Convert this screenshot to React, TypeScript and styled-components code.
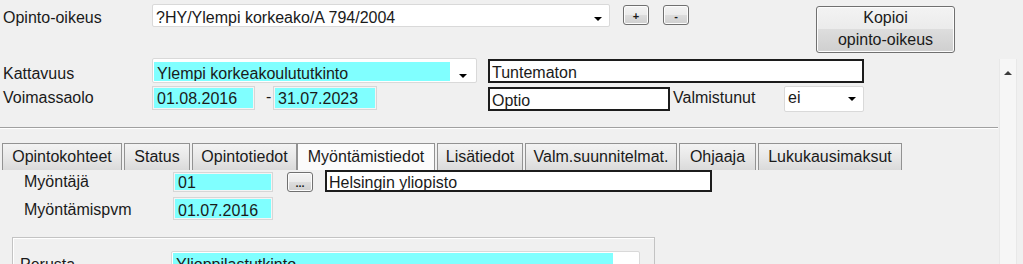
import React from 'react';
import styled, { createGlobalStyle } from 'styled-components';

const GlobalStyle = createGlobalStyle`
  html, body {
    margin: 0;
    padding: 0;
    background: #f0f0f0;
  }
  body {
    font-family: "Liberation Sans", Arial, sans-serif;
    font-size: 16px;
    line-height: 16px;
    color: #1a1a1a;
    overflow: hidden;
  }
  * {
    box-sizing: border-box;
  }
`;

const Screen = styled.div`
  width: 1023px;
  height: 264px;
  overflow: hidden;
  display: flex;
  flex-direction: column;
`;

const Body = styled.div`
  display: flex;
  flex: 1;
  min-height: 0;
`;

const Content = styled.div`
  width: 998px;
  display: flex;
  flex-direction: column;
  flex-shrink: 0;
`;

const Row = styled.div<{ $h: number; $pl?: number }>`
  display: flex;
  align-items: flex-start;
  height: ${p => p.$h}px;
  padding-left: ${p => p.$pl ?? 0}px;
  flex-shrink: 0;
`;

const Label = styled.div<{ $w: number; $pt: number; $pl?: number }>`
  width: ${p => p.$w}px;
  padding-top: ${p => p.$pt}px;
  padding-left: ${p => p.$pl ?? 0}px;
  white-space: nowrap;
  flex-shrink: 0;
`;

const Combo = styled.div<{ $w: number; $h: number; $mt?: number; $ml?: number }>`
  display: flex;
  width: ${p => p.$w}px;
  height: ${p => p.$h}px;
  margin-top: ${p => p.$mt ?? 0}px;
  margin-left: ${p => p.$ml ?? 0}px;
  background: #fff;
  border: 1px solid #d9d9d9;
  border-radius: 2px;
  flex-shrink: 0;
`;

const ComboValue = styled.div<{ $hl?: boolean; $pt: number; $m?: string; $h?: number }>`
  flex: 1;
  margin: ${p => p.$m ?? '0'};
  height: ${p => (p.$h ? `${p.$h}px` : 'auto')};
  padding: ${p => p.$pt}px 0 0 3px;
  background: ${p => (p.$hl ? '#80ffff' : 'transparent')};
  white-space: nowrap;
  overflow: hidden;
`;

const ComboArrow = styled.div<{ $w: number; $pt: number }>`
  width: ${p => p.$w}px;
  padding-top: ${p => p.$pt}px;
  display: flex;
  justify-content: center;
  flex-shrink: 0;
  &::after {
    content: '';
    border-left: 4px solid transparent;
    border-right: 4px solid transparent;
    border-top: 4px solid #000;
  }
`;

const CyanField = styled.div<{ $w: number; $h: number; $pt: number; $mt?: number }>`
  width: ${p => p.$w}px;
  height: ${p => p.$h}px;
  margin-top: ${p => p.$mt ?? 0}px;
  padding: ${p => p.$pt}px 0 0 4px;
  background: #80ffff;
  border: 1px solid #d6d6d6;
  box-shadow: inset 0 0 0 1px #f4f4f4;
  white-space: nowrap;
  flex-shrink: 0;
`;

const TextBox = styled.div<{ $w: number; $h: number; $pt: number; $mt?: number; $ml?: number }>`
  width: ${p => p.$w}px;
  height: ${p => p.$h}px;
  margin-top: ${p => p.$mt ?? 0}px;
  margin-left: ${p => p.$ml ?? 0}px;
  padding: ${p => p.$pt}px 0 0 2px;
  background: #fff;
  border: 2px solid #1c1c1c;
  white-space: nowrap;
  flex-shrink: 0;
`;

const Dash = styled.div`
  width: 18px;
  padding: 3px 0 0 11px;
  flex-shrink: 0;
`;

const Inline = styled.div<{ $w: number; $pt: number; $ml?: number }>`
  width: ${p => p.$w}px;
  margin-left: ${p => p.$ml ?? 0}px;
  padding-top: ${p => p.$pt}px;
  white-space: nowrap;
  flex-shrink: 0;
`;

const buttonFace = `
  border: 1px solid #707070;
  border-radius: 3px;
  background: linear-gradient(#f3f3f3 0%, #ebebeb 50%, #dddddd 50%, #cfcfcf 100%);
  box-shadow: inset 0 0 0 1px #fcfcfc;
  color: #1a1a1a;
  font-family: "Liberation Sans", Arial, sans-serif;
  flex-shrink: 0;
`;

const SmallButton = styled.div<{ $ml: number; $mt: number }>`
  ${buttonFace}
  width: 26px;
  height: 20px;
  margin-left: ${p => p.$ml}px;
  margin-top: ${p => p.$mt}px;
  font-size: 11px;
  font-weight: bold;
  line-height: 11px;
  padding-top: 5px;
  text-align: center;
`;

const CopyButton = styled.div`
  ${buttonFace}
  width: 139px;
  height: 47px;
  margin-left: 127px;
  margin-top: 6px;
  font-size: 16px;
  line-height: 22px;
  text-align: center;
`;

const ScrollTrack = styled.div`
  width: 18px;
  margin: 1px 0 0 1px;
  padding-top: 12px;
  background: #f6f6f6;
  border-left: 1px solid #e8e8e8;
  border-right: 1px solid #e8e8e8;
  display: flex;
  justify-content: center;
  flex-shrink: 0;
  &::before {
    content: '';
    height: 0;
    border-left: 4px solid transparent;
    border-right: 4px solid transparent;
    border-bottom: 4px solid #3c3c3c;
  }
`;

const Separator = styled.div`
  height: 2px;
  border-top: 1px solid #a0a0a0;
  border-bottom: 1px solid #ffffff;
  flex-shrink: 0;
`;

const TabStrip = styled.div`
  display: flex;
  gap: 2px;
  height: 27px;
  margin-top: 14px;
  padding-left: 2px;
  flex-shrink: 0;
`;

const Tab = styled.div<{ $active?: boolean; $w: number }>`
  width: ${p => p.$w}px;
  height: 27px;
  padding-top: 5px;
  text-align: center;
  border: 1px solid #929292;
  border-bottom: none;
  margin-left: ${p => (p.$active ? '-2px' : '0')};
  background: ${p =>
    p.$active ? '#fbfbfb' : 'linear-gradient(#f3f3f3 0%, #e8e8e8 50%, #dadada 100%)'};
  white-space: nowrap;
  flex-shrink: 0;
`;

const GroupBox = styled.div`
  width: 643px;
  height: 60px;
  margin: 13px 0 0 12px;
  border: 1px solid #c3c3c3;
  box-shadow: inset 1px 1px 0 #ffffff;
  display: flex;
  align-items: flex-start;
  padding: 13px 0 0 7px;
  flex-shrink: 0;
`;

const tabs = [
  { label: 'Opintokohteet', width: 120 },
  { label: 'Status', width: 66 },
  { label: 'Opintotiedot', width: 105 },
  { label: 'Myöntämistiedot', width: 138 },
  { label: 'Lisätiedot', width: 86 },
  { label: 'Valm.suunnitelmat.', width: 152 },
  { label: 'Ohjaaja', width: 77 },
  { label: 'Lukukausimaksut', width: 144 },
];

export default function App() {
  return (
    <Screen>
      <GlobalStyle />
      <Row $h={58}>
        <Label $w={152} $pt={10} $pl={3}>Opinto-oikeus</Label>
        <Combo $w={458} $h={23} $mt={4}>
          <ComboValue $pt={5}>?HY/Ylempi korkeako/A 794/2004</ComboValue>
          <ComboArrow $w={22} $pt={12} />
        </Combo>
        <SmallButton $ml={13} $mt={5}>+</SmallButton>
        <SmallButton $ml={14} $mt={5}>-</SmallButton>
        <CopyButton>
          Kopioi
          <br />
          opinto-oikeus
        </CopyButton>
      </Row>
      <Body>
        <Content>
          <Row $h={28}>
            <Label $w={152} $pt={8} $pl={3}>Kattavuus</Label>
            <Combo $w={325} $h={25}>
              <ComboValue $hl $pt={4} $m="3px 0 0 1px" $h={19}>
                Ylempi korkeakoulututkinto
              </ComboValue>
              <ComboArrow $w={26} $pt={15} />
            </Combo>
            <TextBox $w={376} $h={24} $pt={4} $mt={1} $ml={11}>Tuntematon</TextBox>
          </Row>
          <Row $h={41}>
            <Label $w={152} $pt={4} $pl={3}>Voimassaolo</Label>
            <CyanField $w={103} $h={24} $pt={4}>01.08.2016</CyanField>
            <Dash>-</Dash>
            <CyanField $w={104} $h={24} $pt={4}>31.07.2023</CyanField>
            <TextBox $w={182} $h={24} $pt={4} $mt={1} $ml={111}>Optio</TextBox>
            <Inline $w={111} $ml={3} $pt={4}>Valmistunut</Inline>
            <Combo $w={80} $h={26}>
              <ComboValue $pt={3}>ei</ComboValue>
              <ComboArrow $w={22} $pt={10} />
            </Combo>
          </Row>
          <Separator />
          <TabStrip>
            {tabs.map(t => (
              <Tab key={t.label} $w={t.width} $active={t.label === 'Myöntämistiedot'}>
                {t.label}
              </Tab>
            ))}
          </TabStrip>
          <Row $h={25} $pl={24}>
            <Label $w={149} $pt={4}>Myöntäjä</Label>
            <CyanField $w={100} $h={20} $pt={2} $mt={2}>01</CyanField>
            <SmallButton $ml={14} $mt={2}>...</SmallButton>
            <TextBox $w={387} $h={22} $pt={3} $ml={12}>Helsingin yliopisto</TextBox>
          </Row>
          <Row $h={29} $pl={24}>
            <Label $w={149} $pt={7}>Myöntämispvm</Label>
            <CyanField $w={100} $h={23} $pt={5} $mt={2}>01.07.2016</CyanField>
          </Row>
          <GroupBox>
            <Label $w={151} $pt={6}>Perusta</Label>
            <Combo $w={469} $h={26}>
              <ComboValue $hl $pt={4} $m="1px 0 0 1px" $h={22}>
                Ylioppilastutkinto
              </ComboValue>
              <ComboArrow $w={26} $pt={15} />
            </Combo>
          </GroupBox>
        </Content>
        <ScrollTrack />
      </Body>
    </Screen>
  );
}
